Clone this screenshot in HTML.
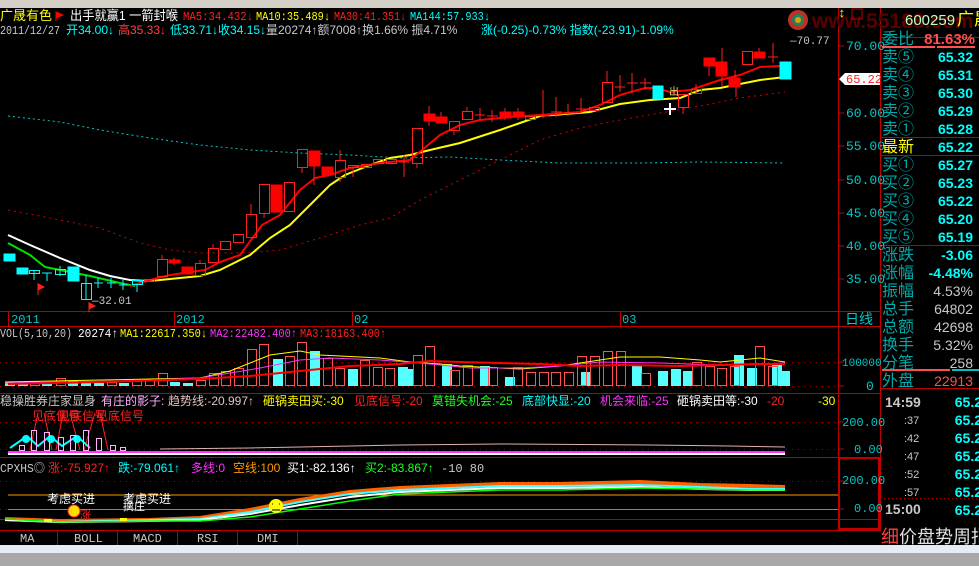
<!DOCTYPE html>
<html><head><meta charset="utf-8"><style>
html,body{margin:0;padding:0;background:#000;width:979px;height:566px;overflow:hidden}
svg{display:block;font-size:11px;font-family:"Liberation Mono","Noto Sans CJK SC",monospace}
.c{font-family:"Liberation Sans","Noto Sans CJK SC",sans-serif}
.lb{font-family:"Liberation Sans","Noto Sans CJK SC",sans-serif;font-size:16px;fill:#00a8a8}
.v{font-family:"Liberation Sans",sans-serif;font-size:14px;font-weight:bold;fill:#00ffff;text-anchor:end}
.g{fill:#c8c8c8}
</style></head><body>
<svg width="979" height="566" viewBox="0 0 979 566" xmlns="http://www.w3.org/2000/svg">
<rect width="979" height="566" fill="#000"/>
<rect x="0" y="0" width="979" height="8" fill="#d4d0c8"/>
<rect x="0" y="545" width="979" height="8" fill="#e6ecf4"/>
<rect x="0" y="553" width="979" height="13" fill="#a8a8a8"/>
<g stroke="#c00000" stroke-width="1" fill="none">
<line x1="838.5" y1="8" x2="838.5" y2="531"/>
<line x1="880.5" y1="8" x2="880.5" y2="531"/>
<line x1="0" y1="311.5" x2="880" y2="311.5"/>
<line x1="0" y1="326.5" x2="880" y2="326.5"/>
<line x1="0" y1="393.5" x2="880" y2="393.5"/>
<line x1="0" y1="457.5" x2="880" y2="457.5"/>
<line x1="0" y1="519.5" x2="880" y2="519.5"/>
<line x1="0" y1="530.5" x2="880" y2="530.5"/>
<line x1="8.5" y1="311" x2="8.5" y2="326"/><line x1="174.5" y1="311" x2="174.5" y2="326"/>
<line x1="352.5" y1="311" x2="352.5" y2="326"/><line x1="620.5" y1="311" x2="620.5" y2="326"/>
<line x1="57.5" y1="531" x2="57.5" y2="545"/><line x1="117.5" y1="531" x2="117.5" y2="545"/>
<line x1="177.5" y1="531" x2="177.5" y2="545"/><line x1="237.5" y1="531" x2="237.5" y2="545"/>
<line x1="297.5" y1="531" x2="297.5" y2="545"/>
<rect x="839" y="458" width="40" height="71" stroke-width="2"/>
<line x1="880" y1="37.5" x2="979" y2="37.5"/>
<line x1="880" y1="137.5" x2="979" y2="137.5"/>
<line x1="880" y1="155.5" x2="979" y2="155.5"/>
<line x1="880" y1="245.5" x2="979" y2="245.5"/>
<line x1="880" y1="388.5" x2="979" y2="388.5"/>
</g>
<line x1="882" y1="47" x2="935" y2="47" stroke="#ff5050" stroke-width="2"/>
<line x1="937" y1="47" x2="975" y2="47" stroke="#ff5050" stroke-width="2"/>
<line x1="882" y1="370" x2="950" y2="370" stroke="#ff5050" stroke-width="2"/>
<line x1="952" y1="370" x2="979" y2="370" stroke="#00c0c0" stroke-width="2"/>
<line x1="880" y1="498.5" x2="979" y2="498.5" stroke="#c00000" stroke-dasharray="1 3"/>
<g stroke="#c00000"><line x1="838" y1="46" x2="844" y2="46"/><line x1="838" y1="113" x2="844" y2="113"/><line x1="838" y1="146" x2="844" y2="146"/><line x1="838" y1="180" x2="844" y2="180"/><line x1="838" y1="213" x2="844" y2="213"/><line x1="838" y1="246" x2="844" y2="246"/><line x1="838" y1="279" x2="844" y2="279"/><line x1="838" y1="362" x2="844" y2="362"/><line x1="838" y1="386" x2="844" y2="386"/><line x1="838" y1="422" x2="844" y2="422"/><line x1="838" y1="449" x2="844" y2="449"/><line x1="838" y1="481" x2="844" y2="481"/><line x1="838" y1="509" x2="844" y2="509"/></g>
<g stroke="#a00000" stroke-dasharray="1 5">
<line x1="0" y1="362.5" x2="838" y2="362.5"/><line x1="0" y1="386.5" x2="838" y2="386.5"/>
<line x1="0" y1="422.5" x2="838" y2="422.5"/><line x1="0" y1="449.5" x2="838" y2="449.5"/>
<line x1="0" y1="481.5" x2="838" y2="481.5"/><line x1="0" y1="509.5" x2="838" y2="509.5"/>
</g>
<!-- header -->
<text x="0" y="20" fill="#ffff00" class="c" font-size="13">广晟有色</text>
<path d="M56 12 v9 M56 12 l7 3 l-7 3z" stroke="#f00" fill="#f00"/>
<text x="70" y="20" fill="#fff" class="c" font-size="13" textLength="108" lengthAdjust="spacingAndGlyphs">出手就赢1  一箭封喉</text>
<text x="183" y="20" fill="#ff2020" font-size="12" textLength="70" lengthAdjust="spacingAndGlyphs">MA5:34.432↓</text>
<text x="256" y="20" fill="#ffff00" font-size="12" textLength="74" lengthAdjust="spacingAndGlyphs">MA10:35.489↓</text>
<text x="334" y="20" fill="#ff2020" font-size="12" textLength="72" lengthAdjust="spacingAndGlyphs">MA30:41.351↓</text>
<text x="410" y="20" fill="#00ffff" font-size="12" textLength="80" lengthAdjust="spacingAndGlyphs">MA144:57.933↓</text>
<text x="0" y="34" class="g" font-size="12" textLength="60" lengthAdjust="spacingAndGlyphs">2011/12/27</text>
<text x="66" y="34" fill="#00ffff" class="c" font-size="12">开34.00↓</text>
<text x="118" y="34" fill="#ff4040" class="c" font-size="12">高35.33↓</text>
<text x="170" y="34" fill="#00ffff" class="c" font-size="12">低33.71↓收34.15↓</text>
<text x="266" y="34" fill="#c8c8c8" class="c" font-size="12">量20274↑额7008↑换1.66% 振4.71%</text>
<text x="481" y="34" fill="#00ffff" class="c" font-size="12">涨(-0.25)-0.73% 指数(-23.91)-1.09%</text>
<!-- top right logo -->
<circle cx="798" cy="20" r="10" fill="#c03020"/><circle cx="798" cy="20" r="6" fill="#208060"/><circle cx="798" cy="20" r="3" fill="#e0a000"/>
<text x="812" y="28" fill="#5a0000" font-size="21" font-weight="bold" class="c">www.55188.com</text>
<text x="838" y="17" fill="#ffff00" font-size="13">↕</text>
<rect x="852" y="9" width="10" height="10" fill="none" stroke="#c00000"/>
<text x="905" y="25" fill="#c0ffc0" font-size="15" class="c">600259</text>
<text x="957" y="25" fill="#ffff00" font-size="17" class="c">广晟</text>
<!-- price axis -->
<g fill="#00c8c8" font-size="13"><text x="846" y="50">70.00</text><text x="846" y="117">60.00</text><text x="846" y="150">55.00</text><text x="846" y="184">50.00</text><text x="846" y="217">45.00</text><text x="846" y="250">40.00</text><text x="846" y="283">35.00</text>
<text x="842" y="366" font-size="11">100000</text><text x="866" y="390">0</text><text x="842" y="426" font-size="12">200.00</text><text x="854" y="453" font-size="12">0.00</text><text x="842" y="484" font-size="12">200.00</text><text x="854" y="512" font-size="12">0.00</text></g>
<path d="M839 79 l6 -6 h35 v12 h-35z" fill="#fff"/>
<text x="846" y="83" fill="#ff2020" font-size="12">65.22</text>
<text x="845" y="324" fill="#00c8c8" class="c" font-size="14">日线</text>
<text x="790" y="44" class="g" font-size="11">—70.77</text>
<g fill="#00c8c8" font-size="12"><text x="11" y="323">2011</text><text x="176" y="323">2012</text><text x="354" y="323">02</text><text x="622" y="323">03</text></g>
<!-- MA lines -->
<polyline fill="none" stroke="#00c8c8" stroke-dasharray="2 3" points="8,116 60,122 100,130 150,138 200,145 250,150 300,153 350,155 400,158 450,157 500,160 560,163 640,163 700,162 785,163"/>
<polyline fill="none" stroke="#d00000" stroke-dasharray="2 4" points="8,210 60,220 100,228 140,243 170,250 200,253 240,253 280,250 330,235 360,225 390,218 420,200 460,180 500,160 540,140 580,128 620,120 660,113 700,106 740,98 785,92"/>
<polyline fill="none" stroke="#fff" stroke-width="2" points="8,235 30,245 60,258 90,270 110,276 130,280 148,281"/>
<polyline fill="none" stroke="#00e000" stroke-width="2" points="8,243 30,255 45,267 60,270 90,276 120,283 135,286"/>
<polyline fill="none" stroke="#ffff00" stroke-width="2" points="150,281 200,276 220,270 250,255 270,238 290,225 310,205 330,185 345,175 370,165 390,158 410,155 430,150 460,143 500,130 520,123 540,116 590,112 620,104 650,100 680,98 700,90 720,88 760,80 785,77"/>
<polyline fill="none" stroke="#ff0000" stroke-width="2" points="130,286 150,280 170,275 190,272 205,270 220,262 240,255 262,225 280,215 300,190 315,178 330,175 350,168 380,163 410,160 422,150 440,135 460,125 480,120 510,117 540,115 580,112 600,105 620,95 645,88 655,88 670,92 690,90 720,80 740,75 760,67 780,66"/>
<!-- candles -->
<g stroke-width="1">
<g fill="#00ffff" stroke="#00ffff">
<rect x="4" y="254" width="11" height="7"/><rect x="17" y="268" width="11" height="6"/><rect x="68" y="267" width="11" height="14"/>
<rect x="653" y="86" width="10" height="13"/><rect x="780" y="62" width="11" height="17"/>
<line x1="34" y1="270" x2="34" y2="280"/><line x1="47" y1="273" x2="47" y2="281"/><line x1="42" y1="273" x2="52" y2="273"/>
<line x1="86" y1="275" x2="86" y2="299"/><line x1="98" y1="278" x2="98" y2="288"/><line x1="94" y1="283" x2="103" y2="283"/>
<line x1="111" y1="278" x2="111" y2="288"/><line x1="107" y1="283" x2="116" y2="283"/><line x1="123" y1="280" x2="123" y2="290"/><line x1="119" y1="285" x2="128" y2="285"/>
<line x1="137" y1="284" x2="137" y2="292"/><line x1="60" y1="266" x2="60" y2="276"/>
</g>
<g fill="none" stroke="#00ffff">
<rect x="29.5" y="270.5" width="10" height="3"/><rect x="55.5" y="269.5" width="10" height="5"/><rect x="81.5" y="283.5" width="10" height="16"/><rect x="132.5" y="280.5" width="10" height="4"/>
</g>
<g fill="none" stroke="#ff2020">
<rect x="144.5" y="279.5" width="10" height="2"/><rect x="157.5" y="259.5" width="10" height="17"/><rect x="195.5" y="263.5" width="10" height="12"/>
<rect x="208.5" y="248.5" width="10" height="14"/><rect x="220.5" y="241.5" width="10" height="8"/><rect x="233.5" y="234.5" width="10" height="8"/>
<rect x="246.5" y="214.5" width="10" height="23"/><rect x="259.5" y="184.5" width="10" height="29"/><rect x="284.5" y="182.5" width="10" height="29"/>
<rect x="297.5" y="149.5" width="10" height="18"/><rect x="335.5" y="160.5" width="10" height="17"/><rect x="348.5" y="165.5" width="10" height="2"/>
<rect x="361.5" y="164.5" width="10" height="3"/><rect x="373.5" y="159.5" width="10" height="4"/><rect x="386.5" y="159.5" width="10" height="4"/>
<rect x="412.5" y="128.5" width="10" height="35"/><rect x="449.5" y="121.5" width="10" height="9"/><rect x="462.5" y="111.5" width="10" height="8"/>
<rect x="525.5" y="116.5" width="10" height="3"/><rect x="589.5" y="107.5" width="10" height="3"/><rect x="602.5" y="82.5" width="10" height="20"/>
<rect x="678.5" y="94.5" width="10" height="13"/><rect x="691.5" y="89.5" width="10" height="4"/><rect x="742.5" y="51.5" width="10" height="13"/>
<path d="M162 255v4 M174 258v7 M200 260v4 M213 244v4 M251 204v10 M264 213v5 M302 167v6 M314 166v19 M340 150v10 M340 177v5 M353 167v10 M404 155v22 M417 163v5 M429 106v20 M441 112v8 M454 130v5 M467 107v4 M480 108v12 M492 110v12 M505 108v12 M518 108v12 M543 90v28 M556 97v20 M568 104v12 M581 98v14 M607 71v11 M620 75v17 M632 73v20 M645 78v12 M683 107v7 M696 84v9 M709 66v10 M722 48v14 M722 76v11 M735 70v8 M759 48v10 M773 43v20 M736 87v10 M540 116h10 M551 112h11 M564 113h10 M576 109h11 M615 87h10 M627 83h11 M640 83h11 M768 57h10 M475 115h10 M487 116h11 M399 162h10"/>
</g>
<g fill="#ff0000" stroke="#ff0000">
<rect x="169" y="260" width="11" height="3"/><rect x="182" y="267" width="11" height="7"/><rect x="271" y="185" width="11" height="27"/>
<rect x="309" y="151" width="11" height="15"/><rect x="322" y="167" width="11" height="8"/><rect x="424" y="114" width="11" height="7"/>
<rect x="436" y="117" width="11" height="6"/><rect x="500" y="112" width="11" height="6"/><rect x="513" y="112" width="11" height="5"/>
<rect x="704" y="58" width="11" height="8"/><rect x="716" y="62" width="11" height="14"/><rect x="729" y="78" width="11" height="9"/><rect x="754" y="52" width="11" height="6"/>
</g>
<path d="M664 109h12 M670 103v12" stroke="#fff" stroke-width="2"/>
<text x="669" y="95" fill="#e0e080" font-size="10" class="c">出</text>
<path d="M38 283v12 M38 284l6 3-6 3z M89 302v10 M89 303l6 3-6 3z" stroke="#ff2020" fill="#ff2020"/>
<text x="92" y="304" class="g" font-size="11">—32.01</text>
</g>
<!-- VOL -->
<text x="0" y="337" class="g" font-size="12" textLength="72" lengthAdjust="spacingAndGlyphs">VOL(5,10,20)</text><text x="78" y="337" fill="#fff" font-size="12" textLength="40" lengthAdjust="spacingAndGlyphs">20274↑</text>
<text x="120" y="337" fill="#ffff00" font-size="12" textLength="87" lengthAdjust="spacingAndGlyphs">MA1:22617.350↓</text><text x="210" y="337" fill="#ff30ff" font-size="12" textLength="87" lengthAdjust="spacingAndGlyphs">MA2:22482.400↑</text><text x="300" y="337" fill="#ff2020" font-size="12" textLength="86" lengthAdjust="spacingAndGlyphs">MA3:18163.400↑</text>
<g fill="#55ffff">
<rect x="5" y="382" width="10" height="4"/><rect x="18" y="382" width="10" height="4"/><rect x="42" y="383" width="10" height="3"/><rect x="68" y="381" width="10" height="5"/><rect x="81" y="382" width="10" height="4"/><rect x="94" y="383" width="10" height="3"/><rect x="119" y="383" width="10" height="3"/><rect x="170" y="382" width="10" height="4"/><rect x="183" y="383" width="10" height="3"/>
<rect x="273" y="359" width="10" height="27"/><rect x="310" y="351" width="10" height="35"/><rect x="348" y="369" width="10" height="17"/><rect x="398" y="367" width="10" height="19"/><rect x="405" y="369" width="8" height="17"/>
<rect x="442" y="364" width="10" height="22"/><rect x="480" y="366" width="10" height="20"/><rect x="505" y="377" width="10" height="9"/><rect x="581" y="372" width="10" height="14"/><rect x="632" y="366" width="10" height="20"/><rect x="658" y="371" width="10" height="15"/><rect x="671" y="369" width="10" height="17"/><rect x="683" y="371" width="10" height="15"/><rect x="734" y="355" width="10" height="31"/><rect x="747" y="368" width="10" height="18"/><rect x="772" y="364" width="10" height="22"/><rect x="781" y="371" width="9" height="15"/>
</g>
<g fill="none" stroke="#ff5050">
<rect x="30.5" y="381.5" width="9" height="4"/><rect x="56.5" y="378.5" width="9" height="7"/><rect x="107.5" y="382.5" width="9" height="3"/><rect x="132.5" y="381.5" width="9" height="4"/><rect x="145.5" y="380.5" width="9" height="5"/><rect x="158.5" y="373.5" width="9" height="12"/><rect x="196.5" y="380.5" width="9" height="5"/><rect x="209.5" y="373.5" width="9" height="12"/><rect x="221.5" y="371.5" width="9" height="14"/><rect x="234.5" y="368.5" width="9" height="17"/>
<rect x="247.5" y="349.5" width="9" height="36"/><rect x="259.5" y="344.5" width="9" height="41"/><rect x="285.5" y="356.5" width="9" height="29"/><rect x="297.5" y="342.5" width="9" height="43"/><rect x="323.5" y="358.5" width="9" height="27"/><rect x="335.5" y="368.5" width="9" height="17"/><rect x="360.5" y="360.5" width="9" height="25"/><rect x="373.5" y="367.5" width="9" height="18"/><rect x="385.5" y="368.5" width="9" height="17"/>
<rect x="413.5" y="355.5" width="9" height="30"/><rect x="425.5" y="346.5" width="9" height="39"/><rect x="450.5" y="370.5" width="9" height="15"/><rect x="463.5" y="365.5" width="9" height="20"/><rect x="488.5" y="367.5" width="9" height="18"/><rect x="513.5" y="367.5" width="9" height="18"/><rect x="526.5" y="372.5" width="9" height="13"/><rect x="539.5" y="372.5" width="9" height="13"/><rect x="551.5" y="372.5" width="9" height="13"/><rect x="564.5" y="372.5" width="9" height="13"/><rect x="577.5" y="356.5" width="9" height="29"/><rect x="590.5" y="356.5" width="9" height="29"/><rect x="603.5" y="351.5" width="9" height="34"/><rect x="616.5" y="351.5" width="9" height="34"/><rect x="641.5" y="373.5" width="9" height="12"/><rect x="692.5" y="362.5" width="9" height="23"/><rect x="705.5" y="366.5" width="9" height="19"/><rect x="717.5" y="368.5" width="9" height="17"/><rect x="730.5" y="366.5" width="9" height="19"/><rect x="755.5" y="346.5" width="9" height="39"/><rect x="768.5" y="366.5" width="9" height="19"/>
</g>
<polyline fill="none" stroke="#ffff00" points="5,382 100,380 150,379 200,378 230,371 250,363 270,355 300,351 320,355 340,356 380,358 410,362 440,364 460,366 520,369 560,366 600,360 620,357 660,357 700,360 720,362 760,358 785,362"/>
<polyline fill="none" stroke="#ff30ff" points="5,383 120,381 200,378 260,368 300,360 330,358 380,360 420,363 470,368 520,368 560,366 600,362 660,363 720,365 785,363"/>
<polyline fill="none" stroke="#ff0000" stroke-width="2" points="8,384 100,382 200,379 250,376 300,371 350,366 400,364 430,361 460,362 500,363 540,364 580,366 620,365 680,366 720,365 760,364 785,364"/>
<!-- indicator 3 -->
<text x="0" y="405" fill="#c8c8c8" class="c" font-size="12">稳操胜券庄家显身</text>
<text x="101" y="405" fill="#ffb0ff" class="c" font-size="12">有庄的影子:</text>
<text x="168" y="405" fill="#e0c0c0" class="c" font-size="12">趋势线:-20.997↑</text>
<text x="263" y="405" fill="#ffff00" class="c" font-size="12">砸锅卖田买:-30</text>
<text x="354" y="405" fill="#ff2020" class="c" font-size="12">见底信号:-20</text>
<text x="432" y="405" fill="#20ff20" class="c" font-size="12">莫错失机会:-25</text>
<text x="522" y="405" fill="#00ffff" class="c" font-size="12">底部快显:-20</text>
<text x="600" y="405" fill="#ff30ff" class="c" font-size="12">机会来临:-25</text>
<text x="677" y="405" fill="#fff" class="c" font-size="12">砸锅卖田等:-30</text>
<text x="767" y="405" fill="#ff2020" class="c" font-size="12">-20</text>
<text x="818" y="405" fill="#ffff00" class="c" font-size="12">-30</text>
<text x="32" y="420" fill="#ff2020" class="c" font-size="12">见底信号</text><text x="58" y="420" fill="#ff2020" class="c" font-size="12">见底信号</text><text x="96" y="420" fill="#ff2020" class="c" font-size="12">见底信号</text>
<path d="M30 450 L38 413 M44 413 L52 450 M56 450 L63 413 M70 413 L80 450 M84 450 L95 413 M100 413 L108 450" stroke="#ff2020" fill="none"/>
<path d="M10 448 L27 436 L38 446 L50 436 L62 446 L77 436 L90 448" stroke="#00ffff" stroke-width="2" fill="none"/>
<g fill="#00ffff"><circle cx="26" cy="439" r="4"/><circle cx="51" cy="439" r="4"/><circle cx="77" cy="439" r="4"/></g>
<g fill="none" stroke="#ffb0ff"><rect x="19.5" y="445.5" width="5" height="5"/><rect x="31.5" y="430.5" width="5" height="20"/><rect x="44.5" y="432.5" width="5" height="18"/><rect x="58.5" y="437.5" width="5" height="13"/><rect x="70.5" y="435.5" width="5" height="15"/><rect x="83.5" y="430.5" width="5" height="20"/><rect x="96.5" y="438.5" width="5" height="12"/><rect x="110.5" y="445.5" width="5" height="5"/><rect x="120.5" y="447.5" width="5" height="3"/></g>
<polyline fill="none" stroke="#e0b0b0" points="160,449 250,448 300,447 400,445 500,444 650,445 730,446 785,447"/>
<rect x="8" y="451" width="777" height="2" fill="#ff30ff"/><rect x="8" y="453" width="777" height="2" fill="#fff"/>
<!-- CPXHS -->
<text x="0" y="472" class="g" font-size="12" textLength="45" lengthAdjust="spacingAndGlyphs">CPXHS◎</text>
<text x="48" y="472" fill="#ff2020" class="c" font-size="12">涨:-75.927↑</text>
<text x="118" y="472" fill="#00ffff" class="c" font-size="12">跌:-79.061↑</text>
<text x="191" y="472" fill="#ff30ff" class="c" font-size="12">多线:0</text>
<text x="233" y="472" fill="#ff9900" class="c" font-size="12">空线:100</text>
<text x="287" y="472" fill="#fff" class="c" font-size="12">买1:-82.136↑</text>
<text x="365" y="472" fill="#20ff20" class="c" font-size="12">买2:-83.867↑</text>
<text x="441" y="472" class="g" font-size="12">-10 80</text>
<line x1="8" y1="495" x2="838" y2="495" stroke="#ff9900"/>
<line x1="8" y1="509.5" x2="838" y2="509.5" stroke="#ff30ff"/>
<path d="M5 519 L60 521 L150 520 L200 518 L250 510 L300 500 L350 492 L400 488 L450 486 L500 484 L560 484 L640 482 L700 485 L750 486 L785 487" stroke="#ff6000" stroke-width="4" fill="none"/>
<path d="M5 520 L60 522 L150 520 L200 519 L250 512 L300 502 L350 494 L400 490 L450 488 L500 486 L560 486 L640 485 L700 487 L750 489 L785 489" stroke="#40ffff" stroke-width="2" fill="none"/>
<path d="M5 520 L60 522 L150 521 L200 520 L250 514 L300 505 L350 497 L400 492 L450 490 L500 488 L560 488 L640 487 L700 489 L750 490 L785 490" stroke="#fff" stroke-width="2" fill="none"/>
<path d="M5 519 L60 522 L150 521 L200 521 L250 517 L300 509 L350 501 L400 494 L450 492 L500 490 L560 490 L640 488 L700 489 L750 490 L785 490" stroke="#00ff00" stroke-width="1.5" fill="none"/>
<text x="47" y="503" fill="#fff" class="c" font-size="12">考虑买进</text>
<text x="123" y="503" fill="#fff" class="c" font-size="12">考虑买进</text>
<text x="123" y="510" fill="#fff" class="c" font-size="11">擒庄</text>
<circle cx="74" cy="511" r="6" fill="#ffdd00" stroke="#ff2020"/>
<text x="80" y="519" fill="#ff2020" class="c" font-size="11">涨</text>
<circle cx="276" cy="506" r="7" fill="#ffff00"/><path d="M272 504h1 M279 504h1 M272 510h8" stroke="#000"/>
<rect x="44" y="519" width="8" height="3" fill="#ffff00"/><rect x="120" y="518" width="7" height="3" fill="#ffff00"/>
<!-- tabs -->
<g fill="#c8c8c8" font-size="12"><text x="20" y="542">MA</text><text x="74" y="542">BOLL</text><text x="133" y="542">MACD</text><text x="197" y="542">RSI</text><text x="257" y="542">DMI</text></g>
<!-- right panel -->
<text x="882" y="44" class="lb">委比</text><text x="975" y="44" fill="#ff5050" font-size="15" font-family="Liberation Sans" font-weight="bold" text-anchor="end">81.63%</text>
<text x="882" y="62" class="lb">卖⑤</text><text x="973" y="62" class="v">65.32</text>
<text x="882" y="80" class="lb">卖④</text><text x="973" y="80" class="v">65.31</text>
<text x="882" y="98" class="lb">卖③</text><text x="973" y="98" class="v">65.30</text>
<text x="882" y="116" class="lb">卖②</text><text x="973" y="116" class="v">65.29</text>
<text x="882" y="134" class="lb">卖①</text><text x="973" y="134" class="v">65.28</text>
<text x="882" y="152" class="lb" style="fill:#ffff00">最新</text><text x="973" y="152" class="v">65.22</text>
<text x="882" y="170" class="lb">买①</text><text x="973" y="170" class="v">65.27</text>
<text x="882" y="188" class="lb">买②</text><text x="973" y="188" class="v">65.23</text>
<text x="882" y="206" class="lb">买③</text><text x="973" y="206" class="v">65.22</text>
<text x="882" y="224" class="lb">买④</text><text x="973" y="224" class="v">65.20</text>
<text x="882" y="242" class="lb">买⑤</text><text x="973" y="242" class="v">65.19</text>
<text x="882" y="260" class="lb">涨跌</text><text x="973" y="260" class="v">-3.06</text>
<text x="882" y="278" class="lb">涨幅</text><text x="973" y="278" class="v">-4.48%</text>
<text x="882" y="296" class="lb">振幅</text><text x="973" y="296" class="v" style="fill:#c8c8c8;font-weight:normal">4.53%</text>
<text x="882" y="314" class="lb">总手</text><text x="973" y="314" class="v" style="fill:#c8c8c8;font-weight:normal">64802</text>
<text x="882" y="332" class="lb">总额</text><text x="973" y="332" class="v" style="fill:#c8c8c8;font-weight:normal">42698</text>
<text x="882" y="350" class="lb">换手</text><text x="973" y="350" class="v" style="fill:#c8c8c8;font-weight:normal">5.32%</text>
<text x="882" y="368" class="lb">分笔</text><text x="973" y="368" class="v" style="fill:#c8c8c8;font-weight:normal">258</text>
<text x="882" y="386" class="lb">外盘</text><text x="973" y="386" class="v" style="fill:#ff5050;font-weight:normal">22913</text>
<g font-family="Liberation Sans" fill="#c8c8c8"><text x="885" y="407" font-size="14" font-weight="bold">14:59</text><text x="904" y="424" font-size="11">:37</text><text x="904" y="442" font-size="11">:42</text><text x="904" y="460" font-size="11">:47</text><text x="904" y="478" font-size="11">:52</text><text x="904" y="496" font-size="11">:57</text><text x="885" y="514" font-size="14" font-weight="bold">15:00</text></g>
<text x="982" y="407" class="v">65.2</text><text x="982" y="425" class="v">65.2</text><text x="982" y="443" class="v">65.2</text><text x="982" y="461" class="v">65.2</text><text x="982" y="479" class="v">65.2</text><text x="982" y="497" class="v">65.2</text><text x="982" y="515" class="v">65.2</text>
<text x="881" y="543" fill="#ff4040" class="c" font-size="18">细</text><text x="899" y="543" fill="#e0e0e0" class="c" font-size="18">价盘势周指</text>
</svg>
</body></html>
